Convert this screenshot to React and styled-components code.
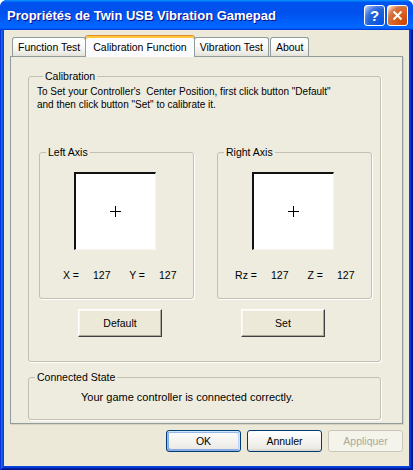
import React from "react";
import styled, { createGlobalStyle, css } from "styled-components";

const GlobalStyle = createGlobalStyle`
  html, body {
    margin: 0;
    padding: 0;
    background: #fff;
  }
  body {
    font-family: "Liberation Sans", Arial, sans-serif;
  }
`;

const Window = styled.div`
  width: 413px;
  height: 470px;
  display: flex;
  flex-direction: column;
  border-radius: 7px 7px 0 0;
  overflow: hidden;
  background: #0831d9;
`;

const TitleBar = styled.div`
  height: 30px;
  flex: none;
  display: flex;
  align-items: center;
  padding: 0 5px 0 7px;
  background: linear-gradient(
    180deg,
    #0997ff 0%,
    #0053ee 8%,
    #0050ee 40%,
    #0066ff 88%,
    #0066ff 93%,
    #005bff 95%,
    #003dd7 96%,
    #003dd7 100%
  );
`;

const TitleText = styled.div`
  flex: 1;
  color: #fff;
  font-size: 13px;
  font-weight: bold;
  text-shadow: 1px 1px #0f1089;
  white-space: nowrap;
`;

const CaptionButtons = styled.div`
  display: flex;
  gap: 2px;
`;

const CaptionButton = styled.div`
  width: 21px;
  height: 21px;
  box-sizing: border-box;
  border: 1px solid #fff;
  border-radius: 3px;
  display: flex;
  align-items: center;
  justify-content: center;
  color: #fff;
  font-weight: bold;
  font-size: 15px;
  background: ${(p) =>
    p.$variant === "close"
      ? "radial-gradient(circle at 90% 90%, #cc4600 0, #dc6527 55%, #cd7546 70%, #ffccb2 90%, #fff 100%)"
      : "radial-gradient(circle at 90% 90%, #0054e9 0, #2263d5 55%, #4479e4 70%, #a3bbec 90%, #fff 100%)"};
`;

const Frame = styled.div`
  flex: 1;
  display: flex;
  padding: 0 4px 4px;
  background: #0842d9;
  box-shadow: inset 1px 0 #0831d9, inset -1px -1px #00138c, inset 2px 0 #166aee,
    inset -2px -2px #001ea0, inset 3px 0 #0855dd, inset -3px -3px #003bda;
`;

const DialogBody = styled.div`
  flex: 1;
  display: flex;
  flex-direction: column;
  padding: 5px 6px 0;
  background: #ece9d8;
  font-size: 10.5px;
  color: #000;
`;

const TabList = styled.div`
  height: 22px;
  display: flex;
  align-items: flex-end;
  padding-left: 2px;
  margin-bottom: -1px;
  position: relative;
  z-index: 1;
`;

const Tab = styled.div`
  height: 19px;
  margin-bottom: 1px;
  margin-right: 1px;
  padding: 0 5px;
  box-sizing: border-box;
  display: flex;
  align-items: center;
  white-space: nowrap;
  border: 1px solid #919b9c;
  border-bottom: none;
  border-radius: 3px 3px 0 0;
  background: linear-gradient(180deg, #fff 0%, #fafaf8 45%, #ecebe6 85%, #e2e0d6 100%);

  ${(p) =>
    p.$active &&
    css`
      height: 22px;
      margin: 0 -1px 0 -2px;
      padding: 1px 7px 0;
      border-top: 1px solid #e68b2c;
      background: #fcfcfe;
      box-shadow: inset 0 2px #ffc83c;
      position: relative;
      z-index: 1;
    `}
`;

const Panel = styled.div`
  height: 368px;
  flex: none;
  box-sizing: border-box;
  border: 1px solid #919b9c;
  background: #eeecdf;
  padding: 13px 21px 0 17px;
  display: flex;
  flex-direction: column;
  box-shadow: 1px 1px 0 #d6d3c6;
`;

const Group = styled.fieldset`
  margin: ${(p) => p.$gap || 0} 0 0;
  padding: ${(p) => p.$pad || "0"};
  border: 1px solid #c3c0b1;
  border-radius: 3px;
  box-shadow: 1px 1px 0 #fff;
  min-width: 0;
  width: ${(p) => p.$width || "auto"};
  box-sizing: border-box;
  flex: none;
`;

const Legend = styled.legend`
  margin-left: 6px;
  padding: 0 2px;
  line-height: 12px;
  font-size: 10.5px;
`;

const Paragraph = styled.p`
  margin: 0;
  font-size: 10px;
  line-height: 13px;
`;

const AxisRow = styled.div`
  display: flex;
  gap: 23px;
  margin: 35px 0 0 2px;
`;

const AxisBody = styled.div`
  height: 140px;
  display: flex;
  flex-direction: column;
  align-items: center;
`;

const StickBox = styled.div`
  width: 82px;
  height: 78px;
  margin: 14px 4px 0 0;
  box-sizing: border-box;
  background: #fff;
  border-style: solid;
  border-width: 2px 1px 1px 2px;
  border-color: #111 #f5f4ee #f5f4ee #111;
  display: flex;
  align-items: center;
  justify-content: center;
`;

const ValueGrid = styled.div`
  align-self: stretch;
  margin-top: 19px;
  display: grid;
  grid-template-columns: 39px 26px 40px 26px;
  line-height: 12px;
`;

const ValueLabel = styled.span`
  text-align: right;
  white-space: nowrap;
`;

const ValueNumber = styled.span`
  padding-left: 14px;
`;

const ActionRow = styled.div`
  display: flex;
  gap: 79px;
  margin: 10px 0 0 41px;
`;

const ClassicButton = styled.button`
  width: 84px;
  height: 28px;
  box-sizing: border-box;
  padding: 0;
  font: 10.5px "Liberation Sans", Arial, sans-serif;
  color: #000;
  background: #ece9d8;
  border: 1px solid;
  border-color: #fff #404040 #404040 #fff;
  box-shadow: inset -1px -1px #aca899, inset 1px 1px #f7f6ef;
`;

const StatusText = styled.div`
  padding: 8px 0 15px 52px;
  line-height: 13px;
  font-size: 11px;
`;

const ButtonRow = styled.div`
  display: flex;
  justify-content: flex-end;
  gap: 6px;
  margin-top: 6px;
`;

const DialogButton = styled.button`
  width: 75px;
  height: 22px;
  box-sizing: border-box;
  padding: 0;
  font: 10.5px "Liberation Sans", Arial, sans-serif;
  color: #000;
  border: 1px solid #003c74;
  border-radius: 3px;
  background: linear-gradient(180deg, #fff 0%, #ecebe6 86%, #d6d0c5 100%);

  ${(p) =>
    p.$default &&
    css`
      box-shadow: inset -1px 1px #cee7ff, inset 1px 2px #98b8ea, inset -2px 2px #bcd4f6,
        inset 1px -1px #89ade4, inset 2px -2px #89ade4;
    `}

  &:disabled {
    color: #aca899;
    border-color: #c9c7ba;
    background: #f5f4ea;
  }
`;

const Crosshair = () => (
  <svg width="11" height="11" viewBox="0 0 11 11">
    <path d="M5.5 0V11M0 5.5H11" stroke="#000" strokeWidth="1" />
  </svg>
);

const CloseIcon = () => (
  <svg width="11" height="11" viewBox="0 0 11 11">
    <path d="M1.5 1.5L9.5 9.5M9.5 1.5L1.5 9.5" stroke="#fff" strokeWidth="2" />
  </svg>
);

const axes = [
  { name: "Left Axis", a: "X =", b: "Y =" },
  { name: "Right Axis", a: "Rz =", b: "Z =" },
];

const App = () => {
  return (
    <>
      <GlobalStyle />
      <Window>
        <TitleBar>
          <TitleText>Propriétés de Twin USB Vibration Gamepad</TitleText>
          <CaptionButtons>
            <CaptionButton $variant="help">?</CaptionButton>
            <CaptionButton $variant="close">
              <CloseIcon />
            </CaptionButton>
          </CaptionButtons>
        </TitleBar>
        <Frame>
          <DialogBody>
            <TabList>
              <Tab>Function Test</Tab>
              <Tab $active>Calibration Function</Tab>
              <Tab>Vibration Test</Tab>
              <Tab>About</Tab>
            </TabList>
            <Panel>
              <Group $pad="3px 0 24px 8px">
                <Legend>Calibration</Legend>
                <Paragraph>
                  To Set your Controller's{"\u00a0"} Center Position, first click button "Default"
                  <br />
                  and then click button "Set" to calibrate it.
                </Paragraph>
                <AxisRow>
                  {axes.map((axis) => (
                    <Group key={axis.name} $width="155px">
                      <Legend>{axis.name}</Legend>
                      <AxisBody>
                        <StickBox>
                          <Crosshair />
                        </StickBox>
                        <ValueGrid>
                          <ValueLabel>{axis.a}</ValueLabel>
                          <ValueNumber>127</ValueNumber>
                          <ValueLabel>{axis.b}</ValueLabel>
                          <ValueNumber>127</ValueNumber>
                        </ValueGrid>
                      </AxisBody>
                    </Group>
                  ))}
                </AxisRow>
                <ActionRow>
                  <ClassicButton>Default</ClassicButton>
                  <ClassicButton>Set</ClassicButton>
                </ActionRow>
              </Group>
              <Group $gap="9px">
                <Legend>Connected State</Legend>
                <StatusText>Your game controller is connected correctly.</StatusText>
              </Group>
            </Panel>
            <ButtonRow>
              <DialogButton $default>OK</DialogButton>
              <DialogButton>Annuler</DialogButton>
              <DialogButton disabled>Appliquer</DialogButton>
            </ButtonRow>
          </DialogBody>
        </Frame>
      </Window>
    </>
  );
};

export default App;
